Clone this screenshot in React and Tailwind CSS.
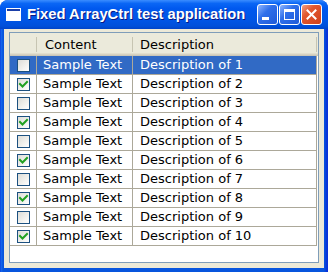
const rows = Array.from({ length: 10 }, (_, i) => ({
  id: i + 1,
  content: 'Sample Text',
  desc: `Description of ${i + 1}`,
  checked: i % 2 === 1,
}));

function CheckBox({ checked }) {
  return (
    <div className="w-[13px] h-[13px] border border-[#1C5180] bg-[linear-gradient(135deg,#DCDCD7_0%,#F2F2EE_60%,#FFFFFF_100%)] flex items-center justify-center">
      {checked && (
        <svg width="11" height="11" viewBox="0 0 11 11">
          <path d="M2 5 L4.5 7.5 L9 3" fill="none" stroke="#21A121" strokeWidth="2" strokeLinecap="square" />
        </svg>
      )}
    </div>
  );
}

function TitleButton({ kind }) {
  const isClose = kind === 'close';
  return (
    <div
      className={`w-[21px] h-[21px] rounded-[3px] border border-white flex items-center justify-center ${
        isClose
          ? 'bg-[linear-gradient(135deg,#F0A088_0%,#E2582F_35%,#D1401A_100%)]'
          : 'bg-[linear-gradient(135deg,#8FB6FF_0%,#2F6FEA_40%,#1F5AD8_100%)]'
      }`}
    >
      {kind === 'min' && <div className="w-[7px] h-[3px] bg-white mt-[8px] mr-[4px]" />}
      {kind === 'max' && <div className="w-[11px] h-[11px] border border-white border-t-[3px]" />}
      {isClose && (
        <svg width="11" height="11" viewBox="0 0 11 11">
          <path d="M1.5 1.5 L9.5 9.5 M9.5 1.5 L1.5 9.5" stroke="white" strokeWidth="2" strokeLinecap="square" />
        </svg>
      )}
    </div>
  );
}

export default function App() {
  return (
    <div className="w-[328px] h-[272px] bg-white font-['DejaVu_Sans',sans-serif]">
      <div className="h-full flex flex-col rounded-t-[8px] overflow-hidden bg-[#0A44D8]">
        {/* Title bar */}
        <div className="h-[29px] shrink-0 flex items-center pl-[6px] pr-[6px] bg-[linear-gradient(to_bottom,#3B8DFF_0%,#0A66F5_12%,#0058EE_30%,#0055E5_70%,#0050DA_90%,#0043C8_100%)]">
          <svg width="15" height="13" viewBox="0 0 15 13" className="shrink-0">
            <rect x="0" y="0" width="15" height="13" fill="#ffffff" />
            <rect x="1" y="1" width="13" height="2" fill="#1B3FA8" />
            <rect x="1" y="3" width="13" height="9" fill="#ffffff" />
          </svg>
          <span className="ml-[6px] text-white font-bold text-[14.75px] font-['Liberation_Sans',sans-serif] [text-shadow:1px_1px_#0A1883] leading-none">
            Fixed ArrayCtrl test application
          </span>
          <div className="ml-auto flex gap-[1px]">
            <TitleButton kind="min" />
            <TitleButton kind="max" />
            <TitleButton kind="close" />
          </div>
        </div>

        {/* Frame + client */}
        <div className="flex-1 flex flex-col px-[4px] pb-[4px] bg-[linear-gradient(to_right,#0831D9_0px,#166AEE_1px,#0855DD_3px,#0855DD_324px,#0831D9_327px)]">
          <div className="flex-1 flex flex-col bg-[#ECE9D8] pt-[3px] px-[5px] pb-[5px]">
            <div className="flex-1 border border-[#7F9DB9] bg-white flex flex-col text-[13px] text-black">
              {/* Header */}
              <div className="h-[23px] shrink-0 flex bg-[#EBEADB] shadow-[inset_0_-1px_#CBC7B8,inset_0_-2px_#D6D2C2,inset_0_-3px_#E2DECD]">
                <div className="w-[27px] flex items-center justify-end">
                  <span className="w-px h-[15px] bg-[#C7C5B2]" />
                </div>
                <div className="w-[96px] flex items-center">
                  <span className="pl-[8px] pt-[1px] flex-1">Content</span>
                  <span className="w-px h-[15px] bg-[#C7C5B2]" />
                </div>
                <div className="w-[184px] flex items-center">
                  <span className="pl-[7px] pt-[1px] flex-1">Description</span>
                  <span className="w-px h-[15px] bg-[#C7C5B2]" />
                </div>
              </div>

              {/* Rows */}
              {rows.map((r) => {
                const sel = r.id === 1;
                return (
                  <div
                    key={r.id}
                    className={`h-[19px] w-[307px] shrink-0 flex border-b border-[#ACA899] ${
                      sel ? 'bg-[#316AC5] text-white' : ''
                    }`}
                  >
                    <div className="w-[27px] flex items-center justify-center pl-[1px] border-r border-[#ACA899]">
                      <CheckBox checked={r.checked} />
                    </div>
                    <div className="w-[96px] flex items-center pl-[6px] border-r border-[#ACA899] whitespace-nowrap">
                      {r.content}
                    </div>
                    <div className="w-[184px] flex items-center pl-[7px] border-r border-[#ACA899] whitespace-nowrap">
                      {r.desc}
                    </div>
                  </div>
                );
              })}
            </div>
          </div>
        </div>
      </div>
    </div>
  );
}
